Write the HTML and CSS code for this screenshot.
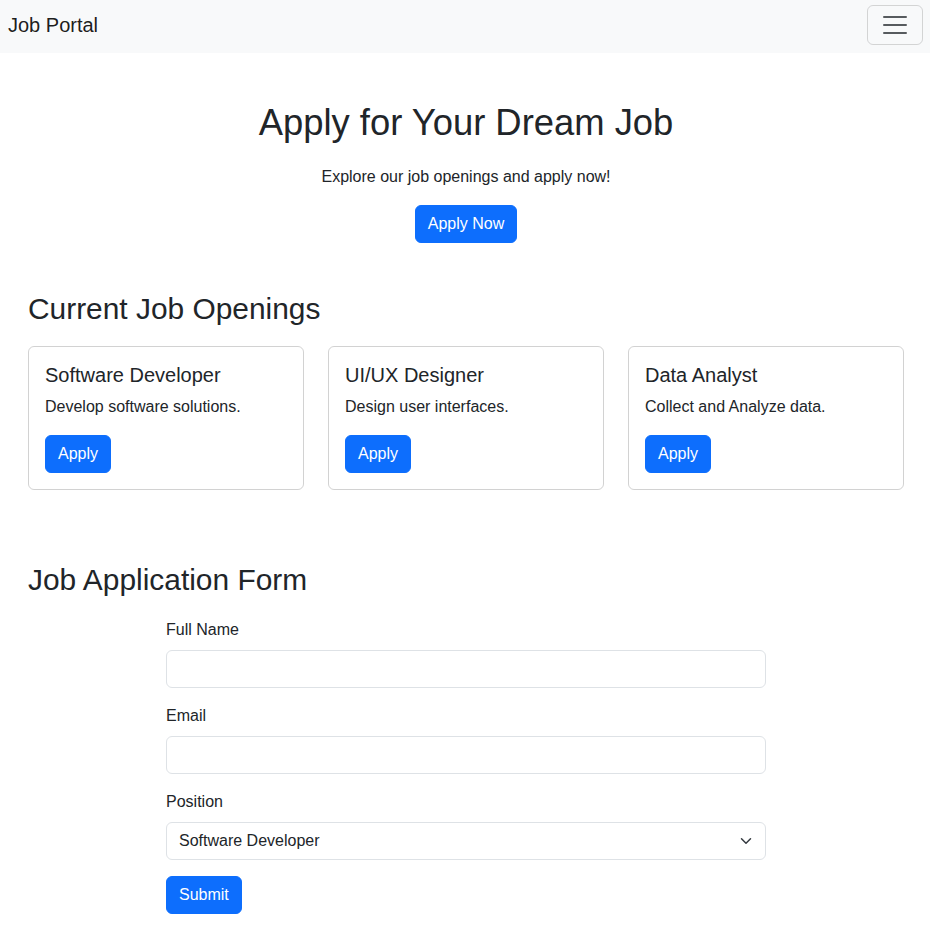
FILE: index.html
```html
<!DOCTYPE html>
<html lang="en">
<head>
<meta charset="utf-8">
<title>Job Portal</title>
<link rel="stylesheet" href="styles.css">
</head>
<body>
<nav class="navbar">
  <a class="brand" href="#">Job Portal</a>
  <button class="toggler" type="button" aria-label="Toggle navigation">
    <svg width="30" height="30" viewBox="0 0 30 30"><path d="M4 7h22M4 15h22M4 23h22" stroke="rgba(33,37,41,0.75)" stroke-width="2" stroke-linecap="round" stroke-miterlimit="10" fill="none"/></svg>
  </button>
</nav>
<main class="page">
  <section class="hero">
    <h1 class="hero-title">Apply for Your Dream Job</h1>
    <p class="hero-text">Explore our job openings and apply now!</p>
    <a class="btn" href="#">Apply Now</a>
  </section>
  <section class="openings">
    <h2 class="section-title openings-title">Current Job Openings</h2>
    <div class="cards">
      <div class="card">
        <h5 class="card-title">Software Developer</h5>
        <p class="card-text">Develop software solutions.</p>
        <a class="btn" href="#">Apply</a>
      </div>
      <div class="card">
        <h5 class="card-title">UI/UX Designer</h5>
        <p class="card-text">Design user interfaces.</p>
        <a class="btn" href="#">Apply</a>
      </div>
      <div class="card">
        <h5 class="card-title">Data Analyst</h5>
        <p class="card-text">Collect and Analyze data.</p>
        <a class="btn" href="#">Apply</a>
      </div>
    </div>
  </section>
  <section class="apply">
    <h2 class="section-title form-title">Job Application Form</h2>
    <form class="form">
      <div class="field">
        <label class="label" for="name">Full Name</label>
        <input class="control" id="name" type="text">
      </div>
      <div class="field">
        <label class="label" for="email">Email</label>
        <input class="control" id="email" type="email">
      </div>
      <div class="field">
        <label class="label" for="pos">Position</label>
        <div class="select-wrap">
          <select class="control select" id="pos">
            <option>Software Developer</option>
            <option>UI/UX Designer</option>
            <option>Data Analyst</option>
          </select>
          <svg class="chev" width="16" height="12" viewBox="0 0 16 16"><path d="m2 5 6 6 6-6" fill="none" stroke="#343a40" stroke-width="2" stroke-linecap="round" stroke-linejoin="round"/></svg>
        </div>
      </div>
      <button class="btn" type="button">Submit</button>
    </form>
  </section>
</main>
</body>
</html>
```

FILE: styles.css
```css
* { box-sizing: border-box; }
html, body { margin: 0; }
body {
  font-family: "Liberation Sans", Arial, sans-serif;
  font-size: 16px;
  line-height: 1.5;
  color: #212529;
  background: #fff;
}
.navbar {
  height: 53px;
  background: #f8f9fa;
  display: flex;
  justify-content: space-between;
  align-items: flex-start;
  padding: 5px 7px 0 8px;
}
.brand {
  font-size: 20px;
  line-height: 30px;
  padding: 5px 0;
  color: rgba(0,0,0,0.9);
  text-decoration: none;
}
.toggler {
  width: 56px;
  height: 40px;
  padding: 4px 12px;
  border: 1px solid rgba(0,0,0,0.15);
  border-radius: 6px;
  background: transparent;
  display: flex;
  align-items: center;
  justify-content: center;
}
.toggler svg { display: block; }
.page {
  width: 876px;
  margin-left: 28px;
  padding-bottom: 48px;
}
.hero {
  text-align: center;
  padding: 48px 0;
}
.hero-title {
  font-size: 36.4px;
  font-weight: 500;
  line-height: 43px;
  margin: 0 0 21px;
}
.hero-text { margin: 0 0 16px; }
.btn {
  display: inline-block;
  font-family: inherit;
  font-size: 16px;
  line-height: 24px;
  padding: 6px 12px;
  border: 1px solid #0d6efd;
  border-radius: 6px;
  background: #0d6efd;
  color: #fff;
  text-decoration: none;
  cursor: pointer;
}
.section-title {
  font-size: 29.9px;
  font-weight: 500;
  line-height: 35.5px;
  margin: 0;
}
.openings-title { margin-bottom: 19px; }
.cards {
  display: grid;
  grid-template-columns: repeat(3, 1fr);
  gap: 24px;
  margin-bottom: 72px;
}
.card {
  border: 1px solid rgba(0,0,0,0.175);
  border-radius: 6px;
  padding: 16px;
}
.card-title {
  font-size: 20px;
  font-weight: 500;
  line-height: 1.2;
  margin: 0 0 8px;
}
.card-text { margin: 0 0 16px; }
.form-title { margin-bottom: 21px; }
.form {
  width: 600px;
  margin: 0 auto;
}
.field { margin-bottom: 16px; }
.label {
  display: block;
  margin-bottom: 8px;
}
.control {
  display: block;
  width: 100%;
  height: 38px;
  padding: 6px 12px;
  font-family: inherit;
  font-size: 16px;
  line-height: 24px;
  color: #212529;
  background: #fff;
  border: 1px solid #dee2e6;
  border-radius: 6px;
}
.select-wrap { position: relative; }
.select {
  appearance: none;
  -webkit-appearance: none;
  padding-right: 36px;
}
.chev {
  position: absolute;
  right: 12px;
  top: 13px;
  width: 16px;
  height: 12px;
  pointer-events: none;
}
```
